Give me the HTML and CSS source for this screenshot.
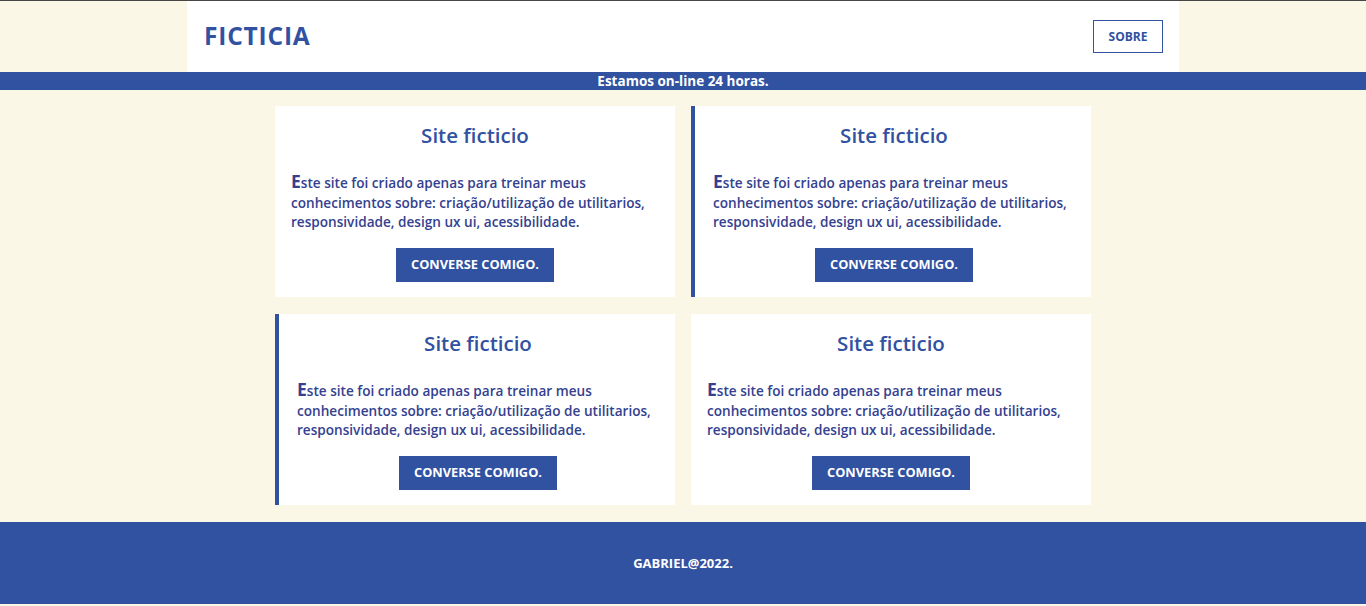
FILE: index.html
```html
<!DOCTYPE html>
<html lang="pt-BR">
<head>
<meta charset="utf-8">
<title>Ficticia</title>
<link rel="stylesheet" href="styles.css">
</head>
<body>
<header class="topo">
  <h1 class="logo">FICTICIA</h1>
  <a class="btn-sobre" href="#">SOBRE</a>
</header>
<div class="aviso">Estamos on-line 24 horas.</div>
<main class="cards">
  <section class="card">
    <h2 class="card-titulo">Site ficticio</h2>
    <p class="card-texto">Este site foi criado apenas para treinar meus conhecimentos sobre: criação/utilização de utilitarios, responsividade, design ux ui, acessibilidade.</p>
    <a class="btn-conversa" href="#">CONVERSE COMIGO.</a>
  </section>
  <section class="card card-borda">
    <h2 class="card-titulo">Site ficticio</h2>
    <p class="card-texto">Este site foi criado apenas para treinar meus conhecimentos sobre: criação/utilização de utilitarios, responsividade, design ux ui, acessibilidade.</p>
    <a class="btn-conversa" href="#">CONVERSE COMIGO.</a>
  </section>
  <section class="card card-borda">
    <h2 class="card-titulo">Site ficticio</h2>
    <p class="card-texto">Este site foi criado apenas para treinar meus conhecimentos sobre: criação/utilização de utilitarios, responsividade, design ux ui, acessibilidade.</p>
    <a class="btn-conversa" href="#">CONVERSE COMIGO.</a>
  </section>
  <section class="card">
    <h2 class="card-titulo">Site ficticio</h2>
    <p class="card-texto">Este site foi criado apenas para treinar meus conhecimentos sobre: criação/utilização de utilitarios, responsividade, design ux ui, acessibilidade.</p>
    <a class="btn-conversa" href="#">CONVERSE COMIGO.</a>
  </section>
</main>
<footer class="rodape">GABRIEL@2022.</footer>
</body>
</html>
```
FILE: styles.css
```css
* { box-sizing: border-box; }
html, body { margin: 0; padding: 0; }
body {
  background: #faf7e7;
  border-top: 1px solid #464646;
  font-family: "Open Sans", "Liberation Sans", sans-serif;
  color: #3151a1;
  padding-bottom: 2px;
}
.topo {
  width: 992px;
  height: 71px;
  margin: 0 auto;
  background: #fff;
  display: flex;
  align-items: center;
  justify-content: space-between;
  padding: 0 16px 0 17px;
}
.logo {
  margin: 0;
  font-size: 24.5px;
  font-weight: 700;
  color: #3151a1;
  letter-spacing: 0.8px;
  margin-top: -2px;
}
.btn-sobre {
  display: flex;
  align-items: center;
  justify-content: center;
  width: 70px;
  height: 33px;
  border: 1px solid #3151a1;
  color: #3151a1;
  text-decoration: none;
  font-size: 12px;
  font-weight: 700;
  margin-top: -1px;
}
.aviso {
  background: #3151a1;
  color: #fff;
  height: 18px;
  line-height: 18px;
  text-align: center;
  font-size: 13.5px;
  font-weight: 700;
}
.cards {
  width: 816px;
  margin: 16px auto 17px;
  display: grid;
  grid-template-columns: 400px 400px;
  column-gap: 16px;
  row-gap: 17px;
}
.card {
  background: #fff;
  height: 191px;
  padding: 13px 16px 15px 16px;
  display: flex;
  flex-direction: column;
  align-items: center;
}
.card-borda {
  border-left: 4px solid #3151a1;
  padding-left: 18px;
}
.card-titulo {
  margin: 0;
  font-size: 20.5px;
  font-weight: 600;
  line-height: 32px;
  color: #3151a1;
}
.card-texto {
  align-self: stretch;
  margin: 21px 0 0;
  font-size: 13.6px;
  font-weight: 600;
  line-height: 19.5px;
  color: #34418f;
}
.card-texto::first-letter {
  font-size: 17.5px;
  font-weight: 700;
}
.btn-conversa {
  margin-top: auto;
  width: 158px;
  height: 34px;
  padding-bottom: 2px;
  background: #3151a1;
  color: #fff;
  text-decoration: none;
  font-size: 12.8px;
  font-weight: 700;
  display: flex;
  align-items: center;
  justify-content: center;
}
.rodape {
  background: #3151a1;
  color: #fff;
  height: 82px;
  display: flex;
  align-items: center;
  justify-content: center;
  font-size: 13px;
  font-weight: 700;
}
```
